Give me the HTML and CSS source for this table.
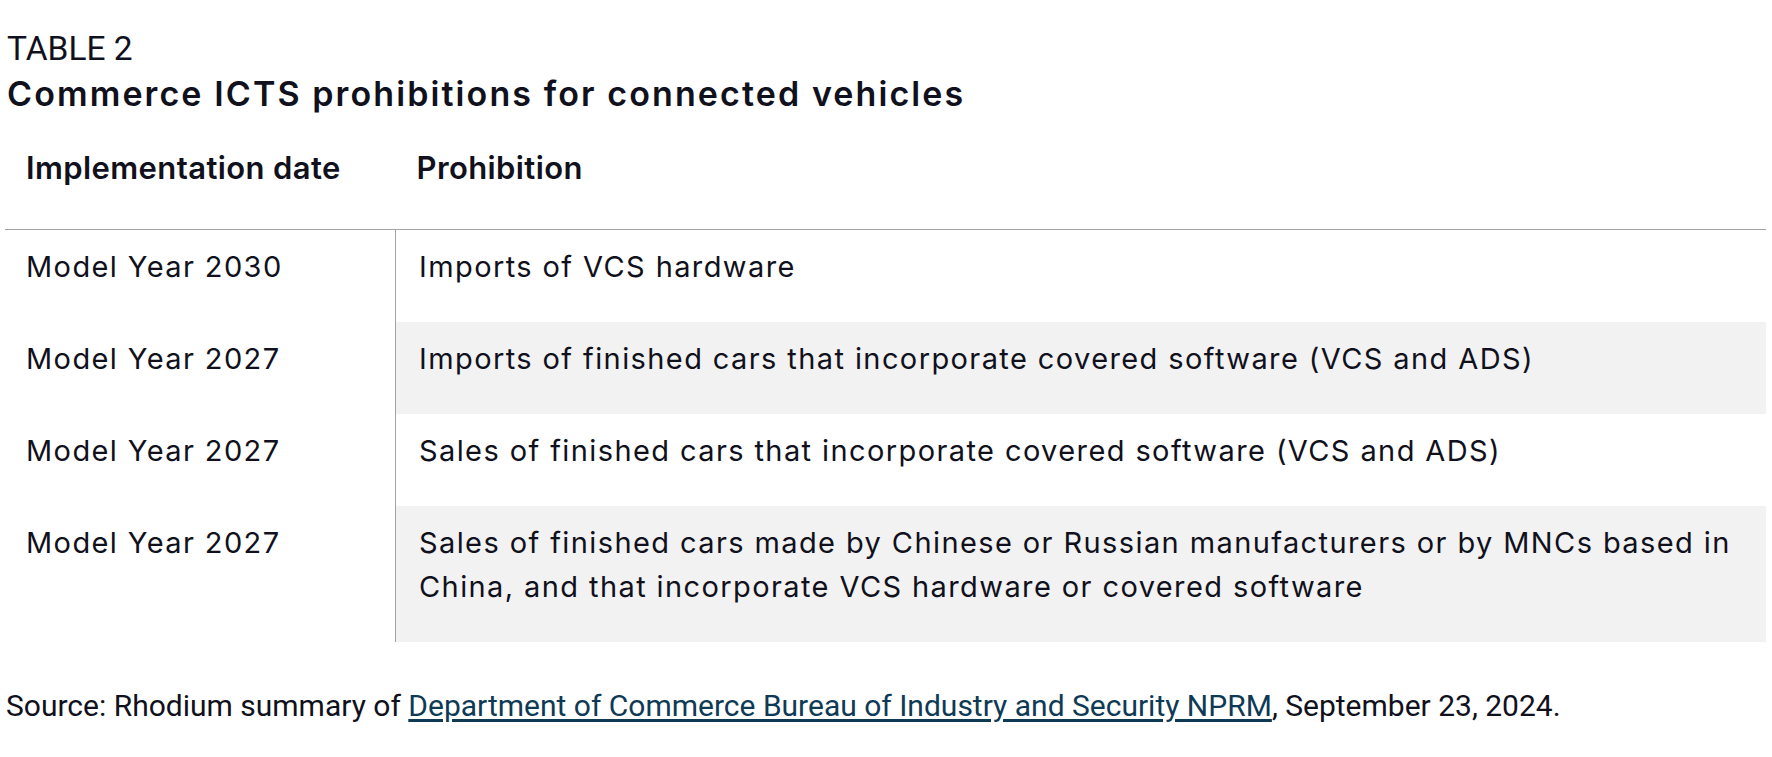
FILE: index.html
```html
<!DOCTYPE html>
<html lang="en">
<head>
<meta charset="utf-8">
<title>Commerce ICTS prohibitions for connected vehicles</title>
<link rel="stylesheet" href="styles.css">
</head>
<body>
<div class="page">
  <div class="eyebrow">TABLE 2</div>
  <h1 class="title">Commerce ICTS prohibitions for connected vehicles</h1>
  <table class="data">
    <thead>
      <tr>
        <th class="c1">Implementation date</th>
        <th class="c2">Prohibition</th>
      </tr>
    </thead>
    <tbody>
      <tr>
        <td class="c1">Model Year 2030</td>
        <td class="c2">Imports of VCS hardware</td>
      </tr>
      <tr class="alt">
        <td class="c1">Model Year 2027</td>
        <td class="c2">Imports of finished cars that incorporate covered software (VCS and ADS)</td>
      </tr>
      <tr>
        <td class="c1">Model Year 2027</td>
        <td class="c2">Sales of finished cars that incorporate covered software (VCS and ADS)</td>
      </tr>
      <tr class="alt">
        <td class="c1">Model Year 2027</td>
        <td class="c2">Sales of finished cars made by Chinese or Russian manufacturers or by MNCs based in China, and that incorporate VCS hardware or covered software</td>
      </tr>
    </tbody>
  </table>
  <p class="source">Source: Rhodium summary of <a href="#">Department of Commerce Bureau of Industry and Security NPRM</a>, September 23, 2024.</p>
</div>
</body>
</html>
```
FILE: styles.css
```css
html, body {
  margin: 0;
  padding: 0;
  background: #ffffff;
}
.page {
  padding: 26px 6px 0 5px;
  color: #10111c;
  font-family: Roboto, "Liberation Sans", sans-serif;
}
.eyebrow {
  font-size: 33.5px;
  line-height: 45px;
  padding-left: 2px;
  font-weight: 400;
}
.title {
  margin: 0;
  font-family: Inter, Roboto, sans-serif;
  font-size: 34px;
  line-height: 46px;
  font-weight: 600;
  letter-spacing: 2.1px;
  padding-left: 2px;
}
.data {
  width: 100%;
  border-collapse: collapse;
  margin-top: 31px;
  font-family: Inter, "Noto Sans", sans-serif;
  font-size: 29px;
  letter-spacing: 1.4px;
}
.data th {
  text-align: left;
  font-weight: 600;
  font-size: 31px;
  letter-spacing: 0.4px;
  line-height: 40px;
  padding-top: 0;
  padding-bottom: 41px;
  border-bottom: 1px solid #a3a3a3;
}
.data td {
  line-height: 44px;
  padding-top: 15px;
  padding-bottom: 33px;
  vertical-align: top;
}
.data .c1 {
  width: 368px;
  padding-left: 21px;
}
.data th.c2 {
  padding-left: 21px;
}
.data td.c2 {
  padding-left: 23px;
  padding-right: 10px;
  border-left: 1px solid #a3a3a3;
}
.data tr.alt td.c2 {
  background: #f2f2f2;
}
.source {
  margin: 44px 0 0;
  padding-left: 1px;
  font-size: 30px;
  line-height: 40px;
}
.source a {
  color: #0f3a55;
  text-decoration: underline;
  text-underline-offset: 3px;
}
```
